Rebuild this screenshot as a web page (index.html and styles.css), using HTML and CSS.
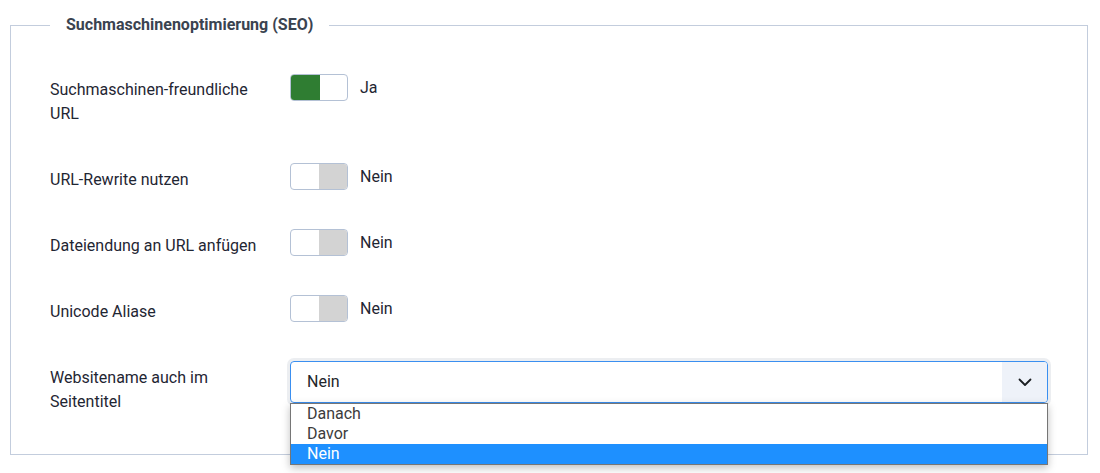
FILE: index.html
```html
<!DOCTYPE html>
<html lang="de">
<head>
<meta charset="utf-8">
<title>SEO</title>
<link rel="stylesheet" href="styles.css">
</head>
<body>
<section class="options">
  <h2 class="legend">Suchmaschinenoptimierung (SEO)</h2>

  <div class="row first">
    <div class="label">Suchmaschinen-freundliche URL</div>
    <div class="control">
      <span class="switch on"><span class="half left"></span><span class="half right"></span></span>
      <span class="state">Ja</span>
    </div>
  </div>

  <div class="row">
    <div class="label">URL-Rewrite nutzen</div>
    <div class="control">
      <span class="switch off"><span class="half left"></span><span class="half right"></span></span>
      <span class="state">Nein</span>
    </div>
  </div>

  <div class="row">
    <div class="label">Dateiendung an URL anfügen</div>
    <div class="control">
      <span class="switch off"><span class="half left"></span><span class="half right"></span></span>
      <span class="state">Nein</span>
    </div>
  </div>

  <div class="row">
    <div class="label">Unicode Aliase</div>
    <div class="control">
      <span class="switch off"><span class="half left"></span><span class="half right"></span></span>
      <span class="state">Nein</span>
    </div>
  </div>

  <div class="row last">
    <div class="label label-select">Websitename auch im Seitentitel</div>
    <div class="control select-wrap">
      <div class="select">
        <span class="value">Nein</span>
        <span class="caret">
          <svg width="14" height="9" viewBox="0 0 14 9"><path d="M1.5 1.5 L7 7 L12.5 1.5" fill="none" stroke="#1b1f23" stroke-width="1.8" stroke-linecap="round" stroke-linejoin="round"/></svg>
        </span>
      </div>
      <ul class="dropdown">
        <li>Danach</li>
        <li>Davor</li>
        <li class="selected">Nein</li>
      </ul>
    </div>
  </div>
</section>
</body>
</html>
```
FILE: styles.css
```css
html, body {
  margin: 0;
  background: #fff;
}
html {
  min-height: 473px;
}
body {
  min-height: 473px;
  box-sizing: border-box;
  padding: 25px 12px 0 10px;
  font-family: Roboto, "Liberation Sans", sans-serif;
  font-size: 16px;
  color: #22262a;
}
.options {
  border: 1px solid #c3cddd;
  padding: 0 39px 3px 39px;
}
.legend {
  display: table;
  margin: -11px 0 0 0;
  padding: 0 16px;
  background: #fff;
  font-weight: 700;
  font-size: 16px;
  line-height: 20px;
  color: #3a4350;
}
.legend + .row {
  margin-top: 39px;
}
.row {
  display: grid;
  grid-template-columns: 240px 1fr;
  margin-bottom: 37px;
}
.label {
  padding-top: 5px;
  padding-right: 20px;
  line-height: 24px;
  color: #1f2633;
}
.row.first .label {
  padding-top: 4px;
}
.label-select {
  padding-top: 5px;
}
.control {
  display: flex;
  align-items: flex-start;
  gap: 12px;
}
.switch {
  display: flex;
  width: 56px;
  height: 25px;
  border: 1px solid #b4c1d5;
  border-radius: 4px;
  overflow: hidden;
  background: #fff;
}
.half {
  flex: 1;
}
.switch.on .left {
  flex: 0 0 29px;
  background: #2f7d32;
}
.switch.off .right {
  flex: 0 0 28px;
  background: #d3d3d3;
}
.state {
  line-height: 24px;
  padding-top: 2px;
  color: #1f2633;
}
.select-wrap {
  position: relative;
  display: block;
}
.select {
  display: flex;
  height: 40px;
  border: 1px solid #3a8ff0;
  border-radius: 4px;
  box-shadow: 0 0 0 3px rgba(200, 205, 215, 0.35);
  overflow: hidden;
}
.value {
  flex: 1;
  padding-left: 16px;
  line-height: 40px;
  color: #22262a;
}
.caret {
  width: 45px;
  display: flex;
  align-items: center;
  justify-content: center;
  background: #eef2f9;
}
.dropdown {
  position: absolute;
  left: 0;
  right: 0;
  top: 42px;
  margin: 0;
  padding: 0;
  list-style: none;
  border: 1px solid #767676;
  background: #fff;
  box-shadow: 0 3px 8px rgba(0, 0, 0, 0.25);
  z-index: 2;
}
.dropdown li {
  height: 20px;
  line-height: 20px;
  padding-left: 16px;
  color: #3c3c3c;
}
.dropdown li.selected {
  background: #1e90ff;
  color: #fff;
}
```
